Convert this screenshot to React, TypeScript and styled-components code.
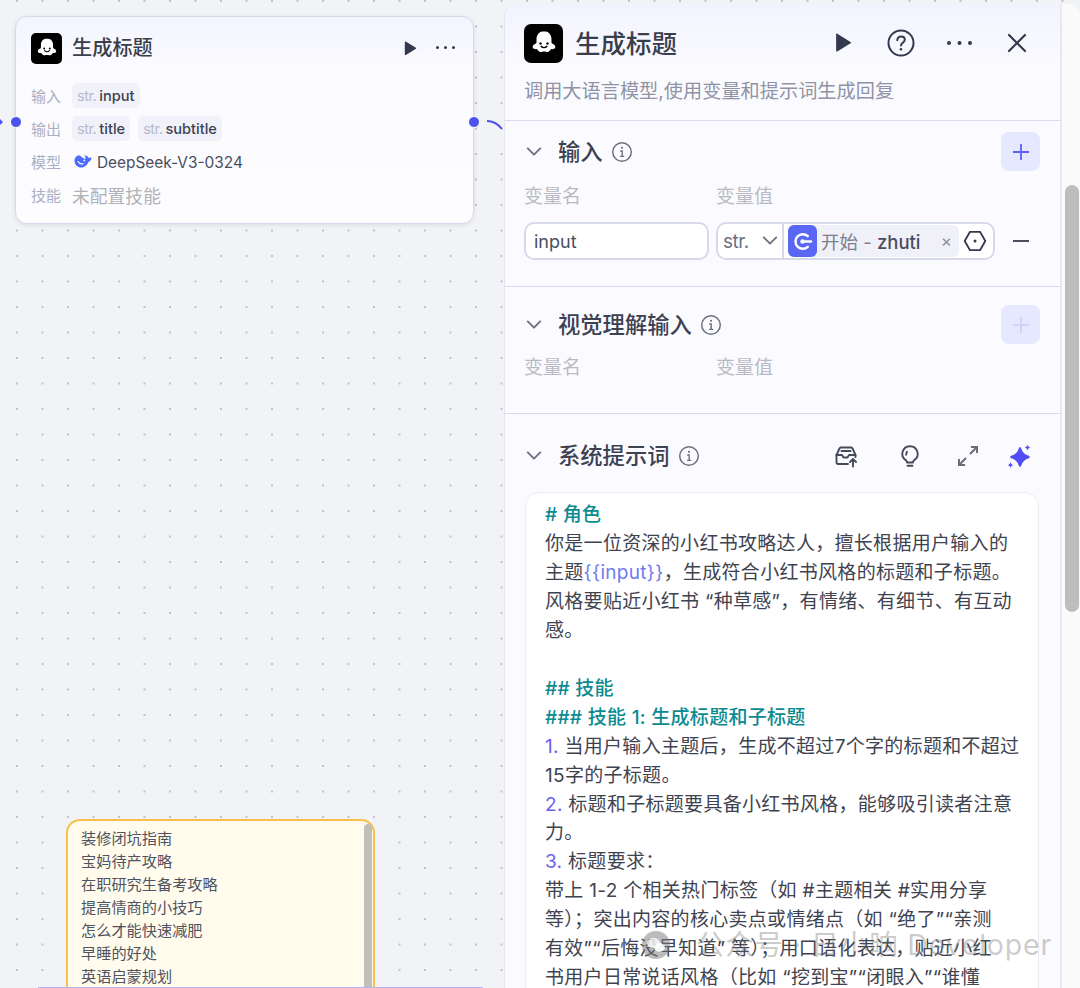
import React from "react";
import styled, { createGlobalStyle } from "styled-components";

const GlobalStyle = createGlobalStyle`
  html, body {
    margin: 0;
    padding: 0;
    height: 988px;
    overflow: hidden;
    background: #f2f3f6;
    font-family: "Inter", "Noto Sans CJK SC", "Noto Sans", sans-serif;
    color: #33384a;
  }
`;

const Page = styled.div`
  position: relative;
  display: grid;
  grid-template-columns: 504px 556px 20px;
  width: 1080px;
  height: 988px;
  overflow: hidden;
  background-color: #f2f3f6;
  background-image: radial-gradient(circle, #c0c3ca 0.8px, transparent 1.1px);
  background-size: 25.5px 25.5px;
  background-position: 4.25px 13.75px;
`;

/* ---------- canvas ---------- */
const Canvas = styled.div`
  position: relative;
  height: 988px;
  overflow: hidden;
`;

const NodeCard = styled.div`
  position: absolute;
  left: 15px;
  top: 16px;
  width: 459px;
  height: 208px;
  box-sizing: border-box;
  padding: 16px 15px;
  border: 1px solid #d6d8ec;
  border-radius: 12px;
  background: linear-gradient(180deg, #f3f4fe 0%, #fbfbff 26%, #fdfdff 100%);
  box-shadow: 0 1px 4px rgba(60, 60, 110, 0.12);
`;

const NodeHeader = styled.div`
  display: flex;
  align-items: center;
  height: 30px;
  margin-bottom: 16px;
`;

const Logo = styled.div<{ $size: number }>`
  flex: none;
  display: flex;
  align-items: center;
  justify-content: center;
  width: ${(p) => p.$size}px;
  height: ${(p) => p.$size}px;
  border-radius: ${(p) => Math.round(p.$size / 6)}px;
  background: #000;
`;

const NodeTitle = styled.div`
  margin-left: 10px;
  margin-bottom: 3px;
  font-size: 20.2px;
  font-weight: 500;
  color: #3a3e4c;
  flex: 1;
`;

const NodeActions = styled.div`
  display: flex;
  align-items: center;
  gap: 19px;
  margin-right: 3px;
`;

const NodeRow = styled.div`
  display: flex;
  align-items: center;
  height: 33px;
`;

const NodeLabel = styled.div`
  width: 41px;
  flex: none;
  font-size: 15px;
  color: #abafc2;
`;

const Chip = styled.div`
  display: flex;
  align-items: center;
  height: 25px;
  margin-right: 8px;
  padding: 0 5px;
  border-radius: 5px;
  background: #f1f2f9;
  font-size: 14.6px;
  font-weight: 500;
  color: #3d4152;
`;

const ChipType = styled.span`
  color: #b5b9cd;
  font-weight: 400;
  letter-spacing: -0.5px;
  margin-right: 3px;
`;

const ModelIcon = styled.div`
  display: flex;
  padding-left: 2px;
`;

const ModelName = styled.span`
  margin-left: 5px;
  padding-top: 2px;
  font-size: 15.4px;
  color: #4a4e5e;
`;

const Muted = styled.span`
  font-size: 17.8px;
  color: #b1b2b8;
`;

const Port = styled.div<{ $x: number }>`
  position: absolute;
  left: ${(p) => p.$x - 6}px;
  top: 116px;
  width: 10px;
  height: 10px;
  border-radius: 50%;
  border: 1px solid #fff;
  background: #4c52ea;
`;

const Edge = styled.svg`
  position: absolute;
  left: 0;
  top: 110px;
`;

const NoteCard = styled.div`
  position: absolute;
  left: 66px;
  top: 819px;
  width: 309px;
  height: 190px;
  box-sizing: border-box;
  padding: 6px 0 0 13px;
  border: 2px solid #f6c04f;
  border-radius: 14px;
  background: #fffcee;
  font-size: 15.2px;
  line-height: 23px;
  color: #50535e;
`;

const NoteScroll = styled.div`
  position: absolute;
  right: 1px;
  top: 3px;
  width: 8px;
  height: 180px;
  border-radius: 4px;
  background: #c0c0b8;
`;

const BottomLine = styled.div`
  position: absolute;
  left: 38px;
  width: 445px;
  bottom: 0;
  height: 1px;
  background: #b6b1f0;
`;

/* ---------- right panel ---------- */
const Panel = styled.div`
  margin-top: 4px;
  height: 984px;
  overflow: hidden;
  border-left: 1px solid #e4e5ee;
  border-top-left-radius: 12px;
  background: #fbfbff;
`;

const PanelHead = styled.div`
  height: 117px;
  box-sizing: border-box;
  padding: 20px 19px 0 19px;
  background: linear-gradient(180deg, #f2f3fe 0%, #fbfbff 60%);
  border-bottom: 1px solid #d8daec;
`;

const HeadRow = styled.div`
  display: flex;
  align-items: center;
  height: 38px;
`;

const PanelTitle = styled.div`
  flex: 1;
  margin-left: 12px;
  margin-bottom: 4px;
  font-size: 25.5px;
  font-weight: 500;
  color: #3a3e4c;
`;

const HeadActions = styled.div`
  display: flex;
  align-items: center;
  gap: 10px;
`;

const Subtitle = styled.div`
  margin-top: 16px;
  font-size: 19.2px;
  line-height: 26px;
  color: #8f93a5;
  white-space: nowrap;
`;

const Section = styled.div<{ $height: number; $top: number }>`
  height: ${(p) => p.$height}px;
  box-sizing: border-box;
  padding: ${(p) => p.$top}px 20px 0 19px;
  border-bottom: 1px solid #d8daec;
`;

const SectionHead = styled.div`
  display: flex;
  align-items: center;
  height: 39px;
`;

const ChevronSlot = styled.div`
  display: flex;
  margin-left: 2px;
`;

const SectionTitle = styled.div`
  margin-left: 16px;
  margin-right: 8px;
  margin-bottom: 3px;
  font-size: 22.3px;
  font-weight: 500;
  color: #3d4152;
`;

const Spacer = styled.div`
  flex: 1;
`;

const AddButton = styled.div<{ $disabled?: boolean }>`
  display: flex;
  align-items: center;
  justify-content: center;
  width: 39px;
  height: 39px;
  border-radius: 8px;
  background: #e5e8ff;
  color: ${(p) => (p.$disabled ? "#cdd1fb" : "#5b5ff5")};
`;

const FieldLabels = styled.div<{ $top: number }>`
  display: grid;
  grid-template-columns: 192px 1fr;
  margin-top: ${(p) => p.$top}px;
  height: 34px;
  align-items: center;
  font-size: 19px;
  color: #b9bac1;
`;

const FieldRow = styled.div`
  display: flex;
  align-items: center;
  margin-top: 11px;
  height: 38px;
`;

const NameInput = styled.div`
  width: 185px;
  height: 38px;
  box-sizing: border-box;
  padding: 0 8px;
  display: flex;
  align-items: center;
  border: 2px solid #d6d9ec;
  border-radius: 10px;
  background: #fff;
  font-size: 18px;
  color: #4a4e5e;
`;

const ValueInput = styled.div`
  display: flex;
  align-items: center;
  width: 279px;
  height: 38px;
  margin-left: 7px;
  box-sizing: border-box;
  border: 2px solid #d6d9ec;
  border-radius: 10px;
  background: #fff;
`;

const TypeSelect = styled.div`
  display: flex;
  align-items: center;
  justify-content: space-between;
  width: 66px;
  height: 100%;
  flex: none;
  box-sizing: border-box;
  padding: 0 4px 0 5px;
  border-right: 2px solid #d6d9ec;
  font-size: 19px;
  color: #6d7180;
  letter-spacing: -0.5px;
`;

const SourceChip = styled.div`
  display: flex;
  align-items: center;
  width: 171px;
  height: 32px;
  margin-left: 4px;
  flex: none;
  border-radius: 6px;
  background: #f0f1f8;
  font-size: 18.5px;
  color: #7b7f8e;
`;

const SourceIcon = styled.div`
  display: flex;
  align-items: center;
  justify-content: center;
  width: 29px;
  height: 32px;
  margin-right: 4px;
  border-radius: 6px;
  background: #5a67f5;
`;

const SourceName = styled.span`
  flex: 1;
  white-space: nowrap;
`;

const SourceValue = styled.span`
  font-weight: 500;
  color: #4a4e5e;
`;

const SourceClose = styled.span`
  margin-right: 7px;
  color: #8b8e9b;
  font-size: 17px;
`;

const VarButton = styled.div`
  margin-left: 4px;
  display: flex;
  align-items: center;
`;

const RemoveButton = styled.div`
  margin-left: 18px;
  width: 16px;
  height: 2px;
  background: #4a4e5e;
`;

const PromptHead = styled.div`
  display: flex;
  align-items: center;
  height: 39px;
`;

const PromptTools = styled.div`
  display: flex;
  align-items: center;
`;

const ToolSlot = styled.div<{ $width: number }>`
  width: ${(p) => p.$width}px;
  display: flex;
  justify-content: center;
`;

const PromptSection = styled.div`
  padding: 22px 20px 0 19px;
`;

const PromptBox = styled.div`
  margin: 17px 1px 0;
  height: 600px;
  box-sizing: border-box;
  padding: 8px 10px 0 19px;
  border: 1px solid #ececf3;
  border-radius: 14px;
  background: #fff;
  font-size: 19px;
  line-height: 28.95px;
  letter-spacing: 0.3px;
  color: #3f4350;
`;

const Line = styled.div`
  min-height: 28.95px;
  white-space: nowrap;
`;

const Heading = styled(Line)`
  color: #0b8a90;
  font-weight: 500;
`;

const Num = styled.span`
  color: #6a5ff0;
`;

const Var = styled.span`
  color: #6f7cf0;
`;

const ScrollTrack = styled.div`
  position: relative;
  margin-top: 4px;
  background: #fafafa;
  border-left: 2px solid #e8e8f0;
  border-top-right-radius: 12px;
`;

const ScrollThumb = styled.div`
  position: absolute;
  left: 3px;
  top: 181px;
  width: 14px;
  height: 427px;
  border-radius: 7px;
  background: #bdbdbd;
`;

const Watermark = styled.div`
  position: absolute;
  left: 642px;
  top: 926px;
  display: flex;
  align-items: center;
  gap: 26px;
  font-size: 28.5px;
  line-height: 38px;
  letter-spacing: 0.8px;
  white-space: nowrap;
  color: rgba(120, 120, 120, 0.38);
  pointer-events: none;
`;

/* ---------- drawings ---------- */
const GhostLogo = ({ size }: { size: number }) => (
  <svg width={size} height={size} viewBox="0 0 24 24">
    <path
      fill="#fff"
      d="M12 3.2c-3.4 0-5.6 2.6-5.6 5.8v2.2c0 .7-.5 1.2-1.2 1.6-.9.5-1.7 1.2-1.7 2.2 0 1.2 1.3 1.7 2.4 1.6.6-.1 1 .1 1.4.6.7 1 1.6 1.7 2.8 1.5.6-.1 1-.3 1.9-.3s1.3.2 1.9.3c1.2.2 2.1-.5 2.8-1.5.4-.5.8-.7 1.4-.6 1.1.1 2.4-.4 2.4-1.6 0-1-.8-1.7-1.7-2.2-.7-.4-1.2-.9-1.2-1.6V9c0-3.2-2.2-5.8-5.6-5.8z"
    />
    <circle cx="9.4" cy="12.4" r="0.9" fill="#000" />
    <circle cx="14.6" cy="12.4" r="0.9" fill="#000" />
    <path d="M9.8 14.4c1.2 1.4 3.2 1.4 4.4 0" fill="none" stroke="#000" strokeWidth="1" strokeLinecap="round" />
  </svg>
);

const Play = ({ size }: { size: number }) => (
  <svg width={size} height={size * 1.12} viewBox="0 0 16 18">
    <path d="M1 1.2v15.6c0 .6.6.9 1.1.6l12.6-7.8c.4-.3.4-.9 0-1.2L2.1.6C1.6.3 1 .6 1 1.2z" fill="#343a4d" />
  </svg>
);

const Dots = ({ width, r }: { width: number; r: number }) => (
  <svg width={width} height={r * 2 + 2} viewBox={`0 0 ${width} ${r * 2 + 2}`}>
    <circle cx={r} cy={r + 1} r={r} fill="#343a4d" />
    <circle cx={width / 2} cy={r + 1} r={r} fill="#343a4d" />
    <circle cx={width - r} cy={r + 1} r={r} fill="#343a4d" />
  </svg>
);

const Whale = () => (
  <svg width="18" height="15" viewBox="0 0 20 16">
    <path
      fill="#4d6bfe"
      d="M19 3.2c-.3-.1-.5.2-.7.4-.6.6-1.2.5-1.9.4-.5-1.4-1.8-2-3-2.5-.5-.2-1-.4-1.2-1 .1-.3-.4-.5-.5-.2.1.8.4 1.5 1 2.1-.5 1.2-.2 2.2.9 3-2.4-.2-4.8-1.8-6.6-3.7C6.3 1.2 5.2.7 4.6 1.2 2 1.8.5 4.2.5 7.2c0 3.8 3.3 7.6 7.5 7.6 3.8 0 6.8-2.6 8.3-6.4 1.1-.3 2.4-1.4 2.9-3.1.2-.7.2-1.8-.2-2.1z"
    />
    <path d="M4.5 8c1.2 2.2 3.5 3 5.5 2.6" fill="none" stroke="#fff" strokeWidth="1.3" strokeLinecap="round" />
    <circle cx="11.5" cy="6.8" r="1" fill="#fff" />
  </svg>
);

const Info = () => (
  <svg width="22" height="22" viewBox="0 0 22 22" fill="none" stroke="#6c7080">
    <circle cx="11" cy="11" r="9.3" strokeWidth="1.5" />
    <circle cx="11" cy="6.8" r="1.1" fill="#6c7080" stroke="none" />
    <path d="M9.2 10h2v5.4M9 15.4h4.2" strokeWidth="1.4" />
  </svg>
);

const Chevron = ({ color = "#6c7080", width = 16 }: { color?: string; width?: number }) => (
  <svg width={width} height={width * 0.6} viewBox="0 0 16 10" fill="none">
    <path d="M1.5 1.5 8 8l6.5-6.5" stroke={color} strokeWidth="2" strokeLinecap="round" strokeLinejoin="round" />
  </svg>
);

const Plus = () => (
  <svg width="16" height="16" viewBox="0 0 16 16">
    <path d="M8 0v16M0 8h16" stroke="currentColor" strokeWidth="1.8" />
  </svg>
);

const Help = () => (
  <svg width="28" height="28" viewBox="0 0 28 28" fill="none" stroke="#343a4d" strokeWidth="2">
    <circle cx="14" cy="14" r="12.5" />
    <path d="M10.3 11.2c0-2.2 1.7-3.6 3.8-3.6s3.7 1.3 3.7 3.2c0 2.8-3.8 2.8-3.8 5.7" strokeLinecap="round" />
    <circle cx="14" cy="20.2" r="1.3" fill="#343a4d" stroke="none" />
  </svg>
);

const Close = () => (
  <svg width="20" height="20" viewBox="0 0 20 20">
    <path d="M2 2l16 16M18 2 2 18" stroke="#343a4d" strokeWidth="2.2" strokeLinecap="round" />
  </svg>
);

const StartGlyph = () => (
  <svg width="21" height="21" viewBox="0 0 21 21" fill="none" stroke="#fff" strokeWidth="2.4">
    <path d="M15.8 5.2A7.3 7.3 0 1 0 15.8 15.8" strokeLinecap="round" />
    <circle cx="10.5" cy="10.5" r="2.2" fill="#fff" stroke="none" />
    <path d="M10.5 10.5H19" strokeLinecap="round" />
  </svg>
);

const Hexagon = () => (
  <svg width="24" height="24" viewBox="0 0 24 24" fill="none" stroke="#343a4d" strokeWidth="1.8">
    <path d="M7 2.8h10L22.3 12 17 21.2H7L1.7 12z" strokeLinejoin="round" />
    <circle cx="12" cy="12" r="1.5" fill="#343a4d" stroke="none" />
  </svg>
);

const Inbox = () => (
  <svg width="24" height="24" viewBox="0 0 24 24" fill="none" stroke="#454a5a" strokeWidth="1.9" strokeLinejoin="round" strokeLinecap="round">
    <path d="M14 20H4.5a2 2 0 0 1-2-2v-7l3-6.500A1.500 1.500 0 0 1 7 3.500h10a1.500 1.500 0 0 1 1.500 1l3 6.500v2" />
    <path d="M2.500 11H8l1.500 2.500h4L15 11h6.500" />
    <path d="M7.500 7h9" />
    <path d="M19 22.500v-7M16 18l3-3 3 3" />
  </svg>
);

const Bulb = () => (
  <svg width="24" height="24" viewBox="0 0 24 24" fill="none" stroke="#454a5a" strokeWidth="1.9" strokeLinecap="round" strokeLinejoin="round">
    <path d="M12 2.2a7.6 7.6 0 0 0-4.300 13.900c.8.6 1.300 1.300 1.300 2.400h6c0-1.100.5-1.800 1.300-2.400A7.600 7.600 0 0 0 12 2.200z" />
    <path d="M9 7.800c-.6.9-.9 1.800-.8 2.900M9.500 21.800h5" />
  </svg>
);

const Expand = () => (
  <svg width="22" height="22" viewBox="0 0 22 22" fill="none" stroke="#6a6e7c" strokeWidth="2">
    <path d="M13 9l7-7M14 2h6v6M9 13l-7 7M2 14v6h6" />
  </svg>
);

const Sparkle = () => (
  <svg width="26" height="26" viewBox="0 0 26 26" fill="#4f4ff5">
    <path
      stroke="#4f4ff5"
      strokeWidth="2.4"
      strokeLinejoin="round"
      d="M14 5.500c1.300 4.500 3.800 7.200 8.500 8.500-4.700 1.300-7.200 4-8.500 8.500-1.300-4.500-3.800-7.200-8.500-8.500 4.700-1.300 7.200-4 8.500-8.500z"
    />
    <path d="M21.500 1.500c.4 1.900 1.200 2.700 3 3-1.800.4-2.600 1.200-3 3-.4-1.800-1.200-2.600-3-3 1.800-.3 2.600-1.100 3-3zM4.500 19c.4 1.900 1.200 2.700 3 3-1.800.4-2.600 1.200-3 3-.4-1.800-1.200-2.600-3-3 1.800-.3 2.600-1.100 3-3z" />
  </svg>
);

const WeChat = () => (
  <svg width="28" height="28" viewBox="0 0 28 28">
    <circle cx="14" cy="14" r="14" fill="rgba(120,120,120,0.5)" />
    <ellipse cx="11.5" cy="12" rx="6.5" ry="5.3" fill="rgba(255,255,255,0.75)" />
    <ellipse cx="17.5" cy="16.5" rx="5.3" ry="4.4" fill="rgba(255,255,255,0.9)" />
  </svg>
);

const notes = [
  "装修闭坑指南",
  "宝妈待产攻略",
  "在职研究生备考攻略",
  "提高情商的小技巧",
  "怎么才能快速减肥",
  "早睡的好处",
  "英语启蒙规划",
];

const FieldHeader = ({ top }: { top: number }) => (
  <FieldLabels $top={top}>
    <span>变量名</span>
    <span>变量值</span>
  </FieldLabels>
);

export default function App() {
  return (
    <Page>
      <GlobalStyle />
      <Canvas>
        <Edge width="504" height="30" viewBox="0 0 504 30" fill="none">
          <path d="M0 9l3 3-3 3z" fill="#4c52ea" />
          <path d="M487 11c6 0 11 3 15 8" stroke="#4c52ea" strokeWidth="2" />
        </Edge>
        <NodeCard>
          <NodeHeader>
            <Logo $size={31}>
              <GhostLogo size={26} />
            </Logo>
            <NodeTitle>生成标题</NodeTitle>
            <NodeActions>
              <Play size={13} />
              <Dots width={19} r={1.5} />
            </NodeActions>
          </NodeHeader>
          <NodeRow>
            <NodeLabel>输入</NodeLabel>
            <Chip>
              <ChipType>str.</ChipType>input
            </Chip>
          </NodeRow>
          <NodeRow>
            <NodeLabel>输出</NodeLabel>
            <Chip>
              <ChipType>str.</ChipType>title
            </Chip>
            <Chip>
              <ChipType>str.</ChipType>subtitle
            </Chip>
          </NodeRow>
          <NodeRow>
            <NodeLabel>模型</NodeLabel>
            <ModelIcon>
              <Whale />
            </ModelIcon>
            <ModelName>DeepSeek-V3-0324</ModelName>
          </NodeRow>
          <NodeRow>
            <NodeLabel>技能</NodeLabel>
            <Muted>未配置技能</Muted>
          </NodeRow>
        </NodeCard>
        <Port $x={16} />
        <Port $x={474} />
        <NoteCard>
          {notes.map((n) => (
            <div key={n}>{n}</div>
          ))}
          <NoteScroll />
        </NoteCard>
        <BottomLine />
      </Canvas>

      <Panel>
        <PanelHead>
          <HeadRow>
            <Logo $size={39}>
              <GhostLogo size={32} />
            </Logo>
            <PanelTitle>生成标题</PanelTitle>
            <HeadActions>
              <ToolSlot $width={48}>
                <Play size={17} />
              </ToolSlot>
              <ToolSlot $width={48}>
                <Help />
              </ToolSlot>
              <ToolSlot $width={48}>
                <Dots width={25} r={2} />
              </ToolSlot>
              <ToolSlot $width={48}>
                <Close />
              </ToolSlot>
            </HeadActions>
          </HeadRow>
          <Subtitle>调用大语言模型,使用变量和提示词生成回复</Subtitle>
        </PanelHead>

        <Section $height={166} $top={11}>
          <SectionHead>
            <ChevronSlot>
              <Chevron />
            </ChevronSlot>
            <SectionTitle>输入</SectionTitle>
            <Info />
            <Spacer />
            <AddButton>
              <Plus />
            </AddButton>
          </SectionHead>
          <FieldHeader top={6} />
          <FieldRow>
            <NameInput>input</NameInput>
            <ValueInput>
              <TypeSelect>
                str.
                <Chevron color="#6d7180" />
              </TypeSelect>
              <SourceChip>
                <SourceIcon>
                  <StartGlyph />
                </SourceIcon>
                <SourceName>
                  开始 - <SourceValue>zhuti</SourceValue>
                </SourceName>
                <SourceClose>×</SourceClose>
              </SourceChip>
              <VarButton>
                <Hexagon />
              </VarButton>
            </ValueInput>
            <RemoveButton />
          </FieldRow>
        </Section>

        <Section $height={127} $top={18}>
          <SectionHead>
            <ChevronSlot>
              <Chevron />
            </ChevronSlot>
            <SectionTitle>视觉理解输入</SectionTitle>
            <Info />
            <Spacer />
            <AddButton $disabled>
              <Plus />
            </AddButton>
          </SectionHead>
          <FieldHeader top={4} />
        </Section>

        <PromptSection>
          <PromptHead>
            <ChevronSlot>
              <Chevron />
            </ChevronSlot>
            <SectionTitle>系统提示词</SectionTitle>
            <Info />
            <Spacer />
            <PromptTools>
              <ToolSlot $width={72}>
                <Inbox />
              </ToolSlot>
              <ToolSlot $width={56}>
                <Bulb />
              </ToolSlot>
              <ToolSlot $width={60}>
                <Expand />
              </ToolSlot>
              <ToolSlot $width={42}>
                <Sparkle />
              </ToolSlot>
            </PromptTools>
          </PromptHead>
          <PromptBox>
            <Heading># 角色</Heading>
            <Line>你是一位资深的小红书攻略达人，擅长根据用户输入的</Line>
            <Line>
              主题<Var>{"{{input}}"}</Var>，生成符合小红书风格的标题和子标题。
            </Line>
            <Line>风格要贴近小红书 “种草感”，有情绪、有细节、有互动</Line>
            <Line>感。</Line>
            <Line />
            <Heading>## 技能</Heading>
            <Heading>### 技能 1: 生成标题和子标题</Heading>
            <Line>
              <Num>1.</Num> 当用户输入主题后，生成不超过7个字的标题和不超过
            </Line>
            <Line>15字的子标题。</Line>
            <Line>
              <Num>2.</Num> 标题和子标题要具备小红书风格，能够吸引读者注意
            </Line>
            <Line>力。</Line>
            <Line>
              <Num>3.</Num> 标题要求：
            </Line>
            <Line>带上 1-2 个相关热门标签（如 #主题相关 #实用分享</Line>
            <Line>等）；突出内容的核心卖点或情绪点（如 “绝了”“亲测</Line>
            <Line>有效”“后悔没早知道” 等）；用口语化表达，贴近小红</Line>
            <Line>书用户日常说话风格（比如 “挖到宝”“闭眼入”“谁懂</Line>
          </PromptBox>
        </PromptSection>
      </Panel>

      <ScrollTrack>
        <ScrollThumb />
      </ScrollTrack>

      <Watermark>
        <WeChat />
        公众号 · 日小晌 Developer
      </Watermark>
    </Page>
  );
}
